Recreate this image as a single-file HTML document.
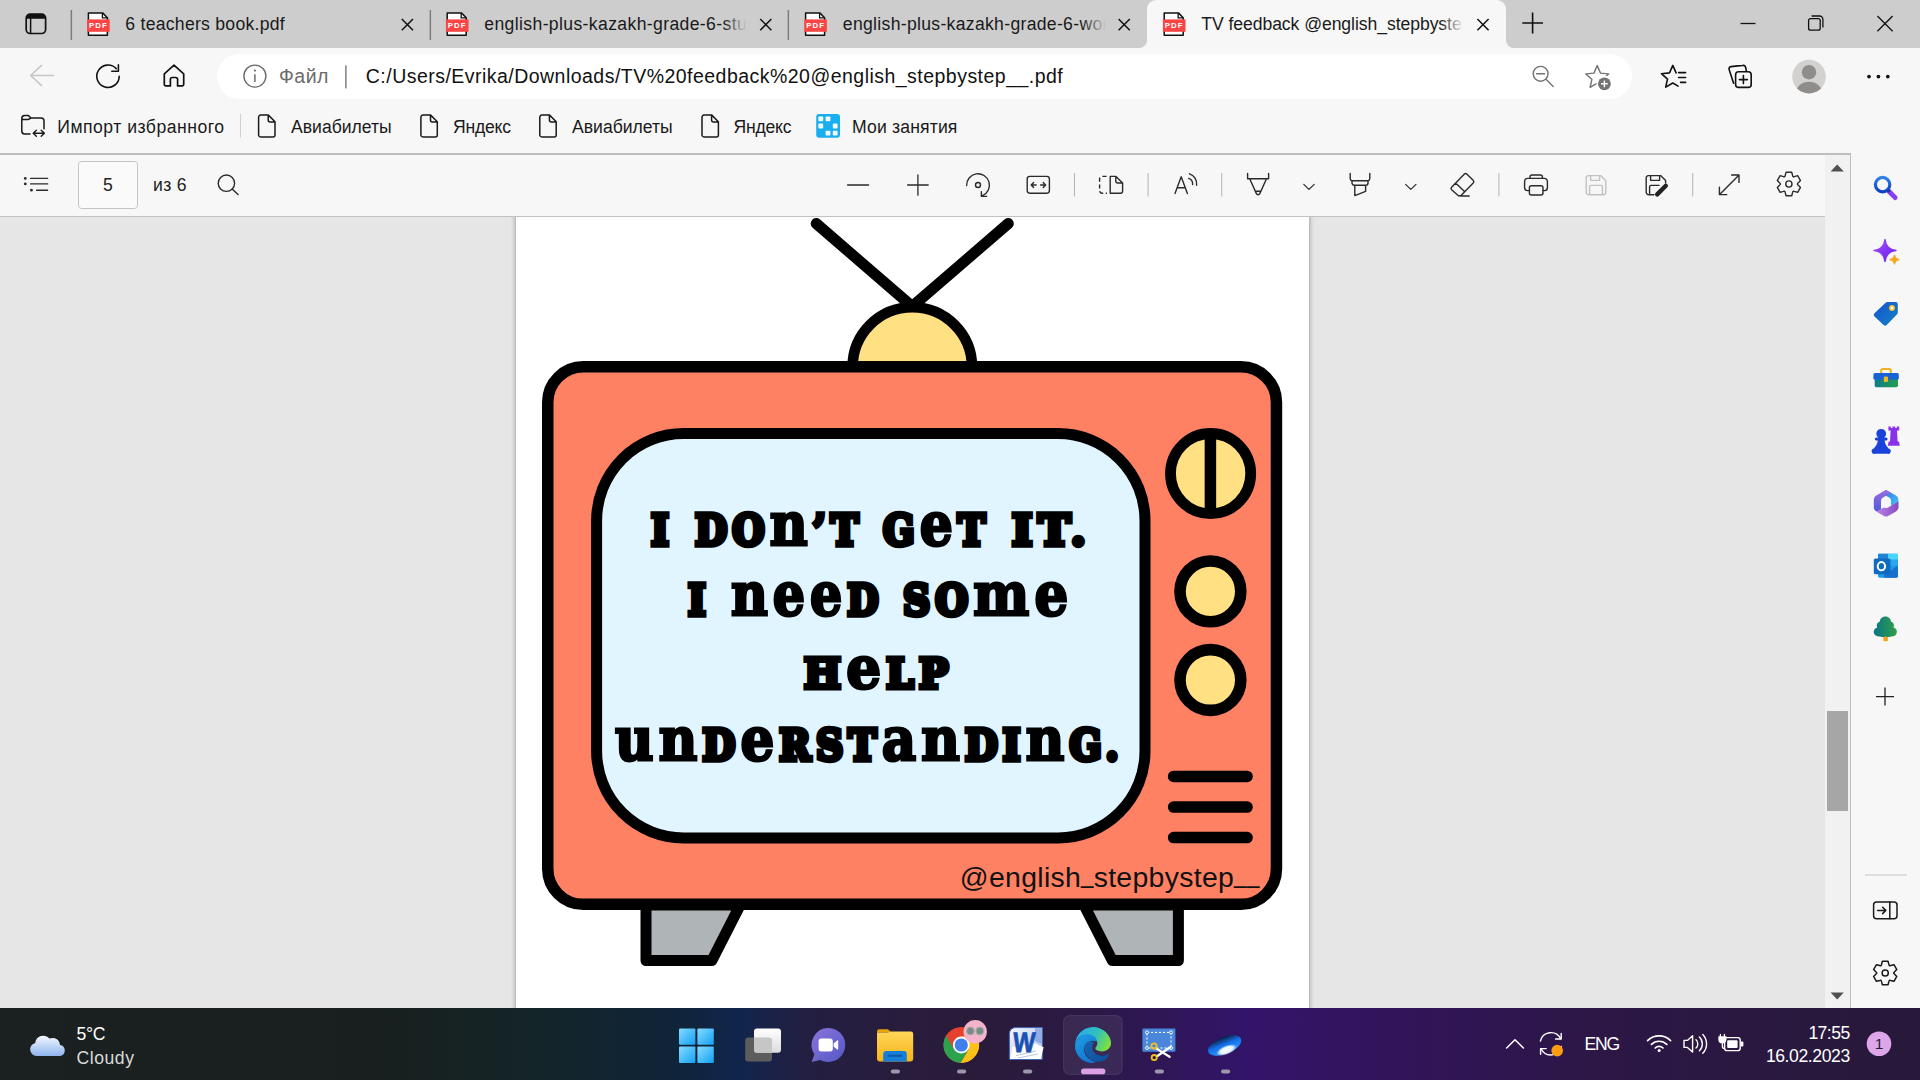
<!DOCTYPE html>
<html lang="ru">
<head>
<meta charset="utf-8">
<title>TV feedback @english_stepbystep__.pdf</title>
<style>
*{box-sizing:border-box;margin:0;padding:0}
html,body{width:1920px;height:1080px;overflow:hidden;background:#f7f7f7;font-family:"Liberation Sans",sans-serif;color:#1b1b1b}
.abs{position:absolute}
#root{position:relative;width:1920px;height:1080px;overflow:hidden}
svg{display:block;overflow:visible}
/* ---------- tab strip ---------- */
#tabs{left:0;top:0;width:1920px;height:48px;background:#cdcdcd}
.tabtxt{position:absolute;top:12px;height:24px;line-height:24px;font-size:17.6px;white-space:nowrap;overflow:hidden;color:#1a1a1a}
.tabsep{position:absolute;top:10px;width:1px;height:29px;background:#8e8e8e}
.fade{position:absolute;top:8px;width:40px;height:32px}
#activetab{left:1147px;top:0;width:359px;height:48px;background:#f7f7f7;border-radius:9px 9px 0 0}
#activetab:before,#activetab:after{content:"";position:absolute;bottom:0;width:8px;height:8px}
#activetab:before{left:-8px;background:radial-gradient(circle at 0 0,transparent 7.5px,#f7f7f7 8.5px)}
#activetab:after{right:-8px;background:radial-gradient(circle at 100% 0,transparent 7.5px,#f7f7f7 8.5px)}
/* ---------- address row ---------- */
#addr{left:0;top:48px;width:1920px;height:56px;background:#f7f7f7}
#pill{left:217px;top:54px;width:1415px;height:45px;border-radius:22.5px;background:#fff}
.urltxt{position:absolute;white-space:nowrap;font-size:19.5px;line-height:26px;top:63px}
/* ---------- bookmarks ---------- */
#bm{left:0;top:104px;width:1920px;height:49px;background:#f7f7f7}
.bmt{position:absolute;top:114.6px;line-height:24px;font-size:17.6px;white-space:nowrap;color:#1a1a1a}
/* ---------- pdf toolbar ---------- */
#pdfbar{left:0;top:155px;width:1825px;height:62px;background:#f7f7f7;border-bottom:1px solid #c2c2c2}
#viewer{left:0;top:217px;width:1825px;height:791px;background:#e6e6e6;overflow:hidden}
#page{left:516px;top:-10px;width:793px;height:820px;background:#fff;box-shadow:0 0 5px rgba(0,0,0,.42)}
#vscroll{left:1825px;top:155px;width:25px;height:853px;background:#f1f1f1}
#side{left:1850px;top:153px;width:70px;height:855px;background:#f7f7f7;border-left:1px solid #bdbdbd}
.tvl{position:absolute;font-family:"DejaVu Serif",serif;font-weight:bold;font-size:40px;line-height:80px;height:80px;white-space:nowrap;color:#000;transform-origin:0 0;-webkit-text-stroke:5px #000;letter-spacing:5.5px;word-spacing:4px;text-shadow:.7px 0 #000,-.7px 0 #000,0 .7px #000,0 -.7px #000}
.tvl b{font-weight:bold;font-size:1.404em;line-height:0;-webkit-text-stroke:2.8px #000}
.us{position:relative;top:-4.3px;display:inline-block;width:12.4px;transform:scaleX(.785);transform-origin:0 50%;letter-spacing:0}
/* ---------- taskbar ---------- */
#task{left:0;top:1008px;width:1920px;height:72px;background:linear-gradient(90deg,#1b2020 0%,#18201f 21%,#13252a 29%,#10243a 35.5%,#11254c 38.5%,#221f42 41.7%,#291c3c 47%,#2a1b3a 52%,#2c1948 57.3%,#33146a 65%,#32145a 73%,#2c1746 83%,#27193a 100%)}
.tt{position:absolute;color:#fff;white-space:nowrap;font-size:17.6px;line-height:22px}
</style>
</head>
<body>
<div id="root">

<!-- ================= TAB STRIP ================= -->
<div id="tabs" class="abs"></div>
<div id="activetab" class="abs"></div>
<!--TABS-->
<svg class="abs" style="left:0;top:0" width="1920" height="48" viewBox="0 0 1920 48">
  <defs>
    <g id="pdfico">
      <path d="M1.2 0.8 H15.4 L20.2 5.6 V23.2 H1.2 Z" fill="#fff" stroke="#111" stroke-width="1.5" stroke-linejoin="round"/>
      <path d="M15.2 1 V5.8 H20" fill="none" stroke="#111" stroke-width="1.3"/>
      <rect x="-0.1" y="7.3" width="22.6" height="12.4" fill="#fb4545"/>
    </g>
    <g id="tabx"><path d="M-5.6 -5.6 L5.6 5.6 M5.6 -5.6 L-5.6 5.6" stroke="#111" stroke-width="1.5" fill="none"/></g>
  </defs>
  <!-- tab actions -->
  <rect x="26.2" y="14.1" width="19.4" height="19.4" rx="4" fill="none" stroke="#111" stroke-width="1.7"/>
  <path d="M26.2 18.8 V18 A4 4 0 0 1 30.2 14.1 H41.6 A4 4 0 0 1 45.6 18 V18.8 Z" fill="#111"/>
  <path d="M30.6 18 V33.4" stroke="#111" stroke-width="1.5"/>
  <!-- separators -->
  <rect x="70.6" y="10" width="1.5" height="30" fill="#7d7d7d"/>
  <rect x="429.6" y="10" width="1.5" height="30" fill="#7d7d7d"/>
  <rect x="787.6" y="10" width="1.5" height="30" fill="#7d7d7d"/>
  <!-- pdf icons -->
  <use href="#pdfico" x="87.2" y="12.1"/>
  <use href="#pdfico" x="446" y="12.1"/>
  <use href="#pdfico" x="804.4" y="12.1"/>
  <use href="#pdfico" x="1163" y="12.1"/>
  <text x="98.4" y="27.9" font-family="Liberation Sans, sans-serif" font-weight="bold" font-size="7.8" fill="#fff" text-anchor="middle" letter-spacing="1.1">PDF</text>
  <text x="457.2" y="27.9" font-family="Liberation Sans, sans-serif" font-weight="bold" font-size="7.8" fill="#fff" text-anchor="middle" letter-spacing="1.1">PDF</text>
  <text x="815.6" y="27.9" font-family="Liberation Sans, sans-serif" font-weight="bold" font-size="7.8" fill="#fff" text-anchor="middle" letter-spacing="1.1">PDF</text>
  <text x="1174.2" y="27.9" font-family="Liberation Sans, sans-serif" font-weight="bold" font-size="7.8" fill="#fff" text-anchor="middle" letter-spacing="1.1">PDF</text>
  <!-- close buttons -->
  <use href="#tabx" x="407.4" y="24.6"/>
  <use href="#tabx" x="765.8" y="24.6"/>
  <use href="#tabx" x="1124.2" y="24.6"/>
  <use href="#tabx" x="1483" y="24.6"/>
  <!-- new tab -->
  <path d="M1522.3 23 H1543 M1532.6 12.6 V33.4" stroke="#111" stroke-width="1.6" fill="none"/>
  <!-- window controls -->
  <path d="M1740.5 23.5 H1755.5" stroke="#111" stroke-width="1.3"/>
  <rect x="1808.6" y="18.6" width="11.6" height="11.6" rx="2" fill="none" stroke="#111" stroke-width="1.3"/>
  <path d="M1811.6 16 H1819.5 A3.4 3.4 0 0 1 1822.9 19.4 V27.4" fill="none" stroke="#111" stroke-width="1.3"/>
  <path d="M1877.4 16 L1892.6 31.2 M1892.6 16 L1877.4 31.2" stroke="#111" stroke-width="1.3"/>
</svg>
<div class="tabtxt" id="t1" style="left:125.3px;letter-spacing:0.270px;width:262px">6 teachers book.pdf</div>
<div class="tabtxt" id="t2" style="left:484.3px;letter-spacing:0.369px;width:262px">english-plus-kazakh-grade-6-student-book.pdf</div>
<div class="tabtxt" id="t3" style="left:842.8px;letter-spacing:0.312px;width:262px">english-plus-kazakh-grade-6-workbook.pdf</div>
<div class="tabtxt" id="t4" style="left:1201.3px;letter-spacing:-0.068px;width:262px">TV feedback @english_stepbystep__.pdf</div>
<div class="fade" style="left:723px;width:25px;background:linear-gradient(90deg,rgba(205,205,205,0),#cdcdcd 95%)"></div>
<div class="fade" style="left:1081.5px;width:25px;background:linear-gradient(90deg,rgba(205,205,205,0),#cdcdcd 95%)"></div>
<div class="fade" style="left:1440px;width:25px;background:linear-gradient(90deg,rgba(247,247,247,0),#f7f7f7 95%)"></div>
<!--/TABS-->

<!-- ================= ADDRESS ROW ================= -->
<div id="addr" class="abs"></div>
<div id="pill" class="abs"></div>
<!--ADDR-->
<svg class="abs" style="left:0;top:48px" width="1920" height="56" viewBox="0 48 1920 56" fill="none">
  <!-- back (disabled) -->
  <path d="M53.6 75.5 H30.8 M41.6 65.4 L30.6 75.5 L41.6 85.6" stroke="#c6c6c6" stroke-width="1.5" stroke-linecap="round" stroke-linejoin="round"/>
  <!-- refresh -->
  <path d="M119.2 76.4 A11.2 11.2 0 1 1 116.2 68.6" stroke="#111" stroke-width="1.6" stroke-linecap="round"/>
  <path d="M118.4 64.9 V71.2 H111.8" stroke="#111" stroke-width="1.6" stroke-linecap="round" stroke-linejoin="round"/>
  <!-- home -->
  <path d="M174 65.2 L164.3 73.8 V84.6 A1.3 1.3 0 0 0 165.6 85.9 H170.4 V79.3 A1.8 1.8 0 0 1 172.2 77.5 H175.8 A1.8 1.8 0 0 1 177.6 79.3 V85.9 H182.4 A1.3 1.3 0 0 0 183.7 84.6 V73.8 Z" stroke="#111" stroke-width="1.7" stroke-linejoin="round"/>
  <!-- info -->
  <circle cx="254.9" cy="76.1" r="11" stroke="#6b6b6b" stroke-width="1.4"/>
  <path d="M254.9 74.2 V82" stroke="#6b6b6b" stroke-width="1.5"/>
  <circle cx="254.9" cy="70.6" r="1.1" fill="#6b6b6b"/>
  <rect x="345.2" y="65.4" width="1.4" height="23" fill="#777"/>
  <!-- zoom out -->
  <circle cx="1540.6" cy="73.8" r="7.4" stroke="#737373" stroke-width="1.4"/>
  <path d="M1546 79.3 L1553.2 86.4 M1536.6 73.8 H1544.6" stroke="#737373" stroke-width="1.4" stroke-linecap="round"/>
  <!-- add favourite -->
  <path d="M1597.2 65.6 L1600.5 73.1 L1608.6 73.9 L1602.5 79.3 L1604.3 87.3 L1597.2 83.2 L1590.1 87.3 L1591.9 79.3 L1585.8 73.9 L1593.9 73.1 Z" stroke="#737373" stroke-width="1.4" stroke-linejoin="round"/>
  <circle cx="1604.4" cy="83.8" r="8" fill="#fff"/>
  <circle cx="1604.4" cy="83.8" r="6.4" fill="#737373"/>
  <path d="M1601 83.8 H1607.8 M1604.4 80.4 V87.2" stroke="#fff" stroke-width="1.4"/>
  <!-- favourites -->
  <path d="M1676.1 72.9 L1672.8 65.4 L1669.5 72.9 L1661.4 73.7 L1667.5 79.1 L1665.7 87.1 L1672.8 83.0 L1678.1 86.1" stroke="#111" stroke-width="1.6" stroke-linejoin="round" stroke-linecap="round"/>
  <path d="M1678.6 72.6 H1685.6 M1678.6 77.5 H1685.6 M1680.6 82.4 H1685.6" stroke="#111" stroke-width="1.6" stroke-linecap="round"/>
  <!-- collections -->
  <path d="M1733.6 83.2 L1729.2 69.8 A2.6 2.6 0 0 1 1731 66.6 L1742.6 65.4 A2.6 2.6 0 0 1 1745.6 67.2 L1746.4 71.2" stroke="#111" stroke-width="1.6" stroke-linecap="round" stroke-linejoin="round"/>
  <rect x="1735.6" y="71.8" width="15.6" height="15.6" rx="3" stroke="#111" stroke-width="1.6"/>
  <path d="M1739.4 79.6 H1747.4 M1743.4 75.6 V83.6" stroke="#111" stroke-width="1.6" stroke-linecap="round"/>
  <!-- profile -->
  <circle cx="1809" cy="76.6" r="16.8" fill="#d3d1cf"/>
  <clipPath id="pclip"><circle cx="1809" cy="76.6" r="16.8"/></clipPath>
  <g clip-path="url(#pclip)" fill="#8f8c8a">
    <circle cx="1809" cy="72.2" r="7.2"/>
    <ellipse cx="1809" cy="92.4" rx="13" ry="10.6"/>
  </g>
  <!-- more -->
  <circle cx="1869" cy="76.6" r="1.85" fill="#111"/><circle cx="1878.4" cy="76.6" r="1.85" fill="#111"/><circle cx="1887.8" cy="76.6" r="1.85" fill="#111"/>
</svg>
<div class="urltxt" id="u1" style="left:279.0px;letter-spacing:0.482px;color:#6b6b6b">Файл</div>
<div class="urltxt" id="u2" style="left:365.8px;letter-spacing:0.471px;color:#111">C:/Users/Evrika/Downloads/TV%20feedback%20@english_stepbystep__.pdf</div>
<!--/ADDR-->

<!-- ================= BOOKMARKS ================= -->
<div id="bm" class="abs"></div>
<div class="abs" style="left:0;top:153px;width:1850px;height:2px;background:#bdbdbd"></div>
<!--BM-->
<svg class="abs" style="left:0;top:104px" width="1920" height="49" viewBox="0 104 1920 49" fill="none">
  <defs>
    <g id="docico"><path d="M2.6 0.8 H10.4 L17 7.4 V20.6 A2 2 0 0 1 15 22.6 H2.6 A2 2 0 0 1 0.6 20.6 V2.8 A2 2 0 0 1 2.6 0.8 Z M10.2 1 V5.6 A2 2 0 0 0 12.2 7.6 H16.8" stroke="#1a1a1a" stroke-width="1.5" stroke-linejoin="round"/></g>
  </defs>
  <!-- import favourites -->
  <path d="M30 134 H24.6 A3 3 0 0 1 21.8 131 V118.6 A3 3 0 0 1 24.6 115.6 H28.4 L31 118 H41 A3 3 0 0 1 44 121 V128.8 M22 119.6 H28 L31 118" stroke="#1a1a1a" stroke-width="1.5" stroke-linejoin="round" stroke-linecap="round"/>
  <path d="M33.6 133.2 H44 M36.4 130.2 L33.2 133.2 L36.4 136.2 M41.2 130.2 L44.4 133.2 L41.2 136.2" stroke="#1a1a1a" stroke-width="1.4" stroke-linejoin="round" stroke-linecap="round"/>
  <rect x="240" y="114" width="1" height="23.4" fill="#d0d0d0"/>
  <use href="#docico" x="258" y="114.3"/>
  <use href="#docico" x="420.3" y="114.3"/>
  <use href="#docico" x="539.2" y="114.3"/>
  <use href="#docico" x="701.4" y="114.3"/>
  <!-- moi zanyatiya -->
  <rect x="816.2" y="114" width="23.8" height="23.8" rx="3" fill="#19aef0"/>
  <g fill="#f2fbff">
    <rect x="818.4" y="116.4" width="4.8" height="4.8" rx=".8"/><rect x="825.6" y="116.4" width="4.8" height="4.8" rx=".8"/>
    <rect x="818.4" y="123.6" width="4.8" height="4.8" rx=".8"/><rect x="832.8" y="123.6" width="4.8" height="4.8" rx=".8"/>
    <rect x="825.6" y="130.8" width="4.8" height="4.8" rx=".8"/><rect x="832.8" y="130.8" width="4.8" height="4.8" rx=".8"/>
  </g>
</svg>
<div class="bmt" id="b1" style="left:57.3px;letter-spacing:0.495px;">Импорт избранного</div>
<div class="bmt" id="b2" style="left:291.0px;letter-spacing:-0.009px;">Авиабилеты</div>
<div class="bmt" id="b3" style="left:453.0px;letter-spacing:-0.234px;">Яндекс</div>
<div class="bmt" id="b4" style="left:572.0px;letter-spacing:-0.009px;">Авиабилеты</div>
<div class="bmt" id="b5" style="left:733.5px;letter-spacing:-0.234px;">Яндекс</div>
<div class="bmt" id="b6" style="left:852.1px;letter-spacing:0.143px;">Мои занятия</div>
<!--/BM-->

<!-- ================= PDF VIEWER ================= -->
<div id="pdfbar" class="abs"></div>
<div id="viewer" class="abs"><div id="page" class="abs"></div></div>
<!--TV-->
<svg class="abs" style="left:516px;top:216px" width="793" height="792" viewBox="516 216 793 792">
  <g stroke="#000" stroke-linecap="round" stroke-linejoin="round">
    <!-- legs -->
    <path d="M646 905 L740.2 905 L711.9 960.6 L646 960.6 Z" fill="#afb5b7" stroke-width="11"/>
    <path d="M1178.4 905 L1084 905 L1112.3 960.6 L1178.4 960.6 Z" fill="#afb5b7" stroke-width="11"/>
    <!-- antenna -->
    <path d="M816.2 223.5 L912.2 306.5 L1008.3 223.5" fill="none" stroke-width="11" stroke-linejoin="miter"/>
    <!-- dome -->
    <path d="M852.6 367 A59.7 59.7 0 0 1 972 367 Z" fill="#ffe082" stroke-width="10.6"/>
    <!-- body -->
    <rect x="547.75" y="366.85" width="728.7" height="537.5" rx="35.5" ry="35.5" fill="#ff8164" stroke-width="11.5"/>
    <!-- screen -->
    <rect x="596.6" y="433.6" width="548.4" height="404.3" rx="87" ry="87" fill="#e0f5ff" stroke-width="11"/>
    <!-- knobs -->
    <circle cx="1210.6" cy="473.6" r="40.1" fill="#ffe082" stroke-width="10.8"/>
    <path d="M1210.4 434 V513" stroke-width="11.5" stroke-linecap="butt"/>
    <circle cx="1210.4" cy="591.4" r="30.4" fill="#ffe082" stroke-width="11.6"/>
    <circle cx="1210.4" cy="680" r="30.4" fill="#ffe082" stroke-width="11.6"/>
    <!-- speaker lines -->
    <path d="M1173.6 776.4 H1247.1 M1173.6 807.1 H1247.1 M1173.6 837.6 H1247.1" stroke-width="11.5"/>
  </g>
</svg>
<div class="tvl" id="l1a" style="left:650.6px;top:486.7px;transform:scale(0.9550,1.0686)">I</div>
<div class="tvl" id="l1b" style="left:694.8px;top:486.7px;transform:scale(0.9274,1.0686)">DO<b>n</b>’T</div>
<div class="tvl" id="l1c" style="left:882.9px;top:486.7px;transform:scale(0.9246,1.0686)">G<b>e</b>T</div>
<div class="tvl" id="l1d" style="left:1012.0px;top:486.7px;transform:scale(1.0809,1.0686)">IT.</div>
<div class="tvl" id="l2a" style="left:688.1px;top:558.4px;transform:scale(0.9500,1.0629)">I</div>
<div class="tvl" id="l2b" style="left:731.0px;top:558.4px;transform:scale(0.9018,1.0629)"><b>nee</b>D</div>
<div class="tvl" id="l2c" style="left:902.6px;top:558.4px;transform:scale(0.9414,1.0629)">SO<b>me</b></div>
<div class="tvl" id="l3" style="left:804.0px;top:631.7px;transform:scale(0.9742,1.0457)">H<b>e</b>LP</div>
<div class="tvl" id="l4" style="left:614.7px;top:703.2px;transform:scale(0.9439,1.0571)"><b>un</b>D<b>e</b>RST<b>an</b>DI<b>n</b>G.</div>
<div class="abs" id="handle" style="left:959.8px;top:859.7px;letter-spacing:0.33px;font-size:28.4px;line-height:34px;white-space:nowrap;color:#111;transform-origin:0 0">@english<span class="us">_</span>stepbystep<span class="us">_</span><span class="us">_</span></div>
<!--/TV-->
<div id="vscroll" class="abs"></div>
<!--PDFBAR-->
<svg class="abs" style="left:0;top:155px" width="1850" height="61" viewBox="0 155 1850 61" fill="none" stroke="#2b2b2b" stroke-width="1.4" stroke-linecap="round" stroke-linejoin="round">
  <!-- contents -->
  <g stroke="none" fill="#2b2b2b"><circle cx="25.3" cy="178.4" r="1.4"/><circle cx="25.3" cy="183.9" r="1.4"/><circle cx="31.4" cy="190.2" r="1.4"/></g>
  <path d="M30.6 178.4 H47.6 M30.6 183.9 H47.6 M36.6 190.2 H47.6"/>
  <rect x="78.5" y="161.5" width="59" height="47" rx="3" fill="#fafafa" stroke="#c4c4c4" stroke-width="1"/>
  <!-- search -->
  <circle cx="226.4" cy="183.2" r="8.2"/><path d="M232.4 189.2 L238 194.6"/>
  <!-- zoom -->
  <path d="M847.6 185 H868.6" stroke-width="1.3"/>
  <path d="M907.6 185 H928.2 M917.9 174.8 V195.2" stroke-width="1.3"/>
  <!-- rotate -->
  <path d="M966.6 185.6 A11.4 11.4 0 1 1 982.6 195.6"/>
  <path d="M981.4 191.6 V196.4 H986.6"/>
  <circle cx="978" cy="185" r="2.5"/>
  <!-- fit width -->
  <rect x="1027.2" y="176.4" width="22.2" height="16.8" rx="2.6"/>
  <path d="M1031.4 185 H1036.2 M1033.6 182.6 L1031.2 185 L1033.6 187.4 M1040.6 185 H1045.4 M1043.2 182.6 L1045.6 185 L1043.2 187.4"/>
  <rect x="1074" y="173" width="1" height="23.4" fill="#b4b4b4" stroke="none"/>
  <!-- page view -->
  <path d="M1110.2 193.2 V176.4 H1116 L1122.6 183 V191 A2.2 2.2 0 0 1 1120.4 193.2 Z M1115.8 176.6 V181 A2 2 0 0 0 1117.8 183 H1122.4"/>
  <path d="M1106.6 176.4 H1102 A2.4 2.4 0 0 0 1099.6 178.8 V190.8 A2.4 2.4 0 0 0 1102 193.2 H1107" stroke-dasharray="4.2 2.6" stroke-linecap="butt"/>
  <rect x="1147.6" y="173" width="1" height="23.4" fill="#b4b4b4" stroke="none"/>
  <!-- read aloud -->
  <path d="M1175 193.6 L1181.2 176.8 L1187.4 193.6 M1177.2 187.8 H1185.2" />
  <path d="M1188.6 178.4 A6 6 0 0 1 1192.6 184.6 M1189.4 173.8 A10.6 10.6 0 0 1 1196.6 185.2"/>
  <rect x="1221.2" y="173" width="1" height="23.4" fill="#b4b4b4" stroke="none"/>
  <!-- draw -->
  <path d="M1247.6 173.4 V178.8 H1268.6 V173.4 M1249.8 179 L1256.4 193.6 A1.8 1.8 0 0 0 1259.8 193.6 L1266.4 179 M1256 191.2 H1260.2"/>
  <path d="M1303.8 184.4 L1309 189.4 L1314.2 184.4" stroke-width="1.2"/>
  <!-- highlight -->
  <path d="M1350.2 173.4 V178.4 A2.6 2.6 0 0 0 1352 180.8 V183 A2.2 2.2 0 0 0 1354.2 185.2 H1365.8 A2.2 2.2 0 0 0 1368 183 V180.8 A2.6 2.6 0 0 0 1369.8 178.4 V173.4 M1352 180.8 H1368 M1354.8 185.4 V195.6 L1365.6 191.4 V185.4"/>
  <path d="M1405.6 184.4 L1410.8 189.4 L1416 184.4" stroke-width="1.2"/>
  <!-- erase -->
  <path d="M1451.6 187.2 L1464.2 174.2 A2 2 0 0 1 1467 174.2 L1473.2 180.2 A2 2 0 0 1 1473.2 183 L1460.8 195.8 H1458.4 L1451.6 189.8 A1.9 1.9 0 0 1 1451.6 187.2 Z M1455.6 183 L1464.8 191.8 M1460.6 196 H1469.2"/>
  <rect x="1498.4" y="173" width="1" height="23.4" fill="#b4b4b4" stroke="none"/>
  <!-- print -->
  <path d="M1529.6 190.6 H1527.4 A2.8 2.8 0 0 1 1524.6 187.8 V181.4 A3 3 0 0 1 1527.6 178.4 H1544.4 A3 3 0 0 1 1547.4 181.4 V187.8 A2.8 2.8 0 0 1 1544.6 190.6 H1542.8 M1530 178.2 V177 A2 2 0 0 1 1532 175 H1540.4 A2 2 0 0 1 1542.4 177 V178.2"/>
  <rect x="1529.4" y="185.8" width="13.6" height="9.2" rx="2"/>
  <!-- save disabled -->
  <g stroke="#c2c2c2"><path d="M1588.4 175.6 H1600.6 L1605.8 180.8 V192.2 A2.6 2.6 0 0 1 1603.2 194.8 H1588.8 A2.6 2.6 0 0 1 1586.2 192.2 V178 A2.4 2.4 0 0 1 1588.4 175.6 Z M1590.6 175.8 V180.4 H1599.6 V175.8 M1589.6 194.6 V186.8 A1.4 1.4 0 0 1 1591 185.4 H1601 A1.4 1.4 0 0 1 1602.4 186.8 V194.6"/></g>
  <!-- save as -->
  <path d="M1654 194.8 H1648.8 A2.6 2.6 0 0 1 1646.2 192.2 V178 A2.4 2.4 0 0 1 1648.4 175.6 H1660.6 L1665.6 180.6 V183 M1650.6 175.8 V180.4 H1659.6 V175.8 M1649.6 194.6 V186.8 A1.4 1.4 0 0 1 1651 185.4 H1659"/>
  <path d="M1657.2 194.4 L1665.8 185.8" stroke-width="4.4" stroke="#222"/>
  <rect x="1692.2" y="173" width="1" height="23.4" fill="#b4b4b4" stroke="none"/>
  <!-- fullscreen -->
  <path d="M1719.6 194.4 L1738.8 175.2 M1731.6 175 H1739 V182.4 M1719.4 187.2 V194.6 H1726.8"/>
  <!-- settings -->
  <path d="M1785.16 175.60 L1786.08 172.23 L1791.72 172.23 L1792.64 175.60 Q1792.80 177.25 1794.31 176.56 L1797.68 175.67 L1800.50 180.56 L1798.05 183.04 Q1796.70 184.00 1798.05 184.96 L1800.50 187.44 L1797.68 192.33 L1794.31 191.44 Q1792.80 190.75 1792.64 192.40 L1791.72 195.77 L1786.08 195.77 L1785.16 192.40 Q1785.00 190.75 1783.49 191.44 L1780.12 192.33 L1777.30 187.44 L1779.75 184.96 Q1781.10 184.00 1779.75 183.04 L1777.30 180.56 L1780.12 175.67 L1783.49 176.56 Q1785.00 177.25 1785.16 175.60 Z" stroke-linejoin="round"/>
  <circle cx="1788.9" cy="184" r="3.1"/>
  <!-- scrollbar arrows & thumb -->
  <path d="M1830.6 171.4 L1837.2 164.6 L1843.8 171.4 Z" fill="#505050" stroke="none"/>
</svg>
<div class="abs" id="p1" style="left:78px;top:173px;width:60px;text-align:center;font-size:17.6px;line-height:24px;color:#222">5</div>
<div class="abs" id="p2" style="left:153.1px;letter-spacing:0.274px;top:173px;font-size:17.6px;line-height:24px;color:#222;white-space:nowrap">из 6</div>
<div class="abs" style="left:1827px;top:711px;width:21px;height:100px;background:#a6a6a6"></div>
<svg class="abs" style="left:1825px;top:985px" width="25" height="20" viewBox="1825 985 25 20"><path d="M1830.6 992.6 L1837.2 999.4 L1843.8 992.6 Z" fill="#505050"/></svg>
<!--/PDFBAR-->
<div id="side" class="abs"></div>
<!--SIDE-->
<svg class="abs" style="left:1851px;top:155px" width="69" height="853" viewBox="1851 155 69 853" fill="none">
  <defs>
    <linearGradient id="gsb" x1="0" y1="0" x2="0" y2="1"><stop offset="0" stop-color="#2b83ea"/><stop offset="1" stop-color="#123fc4"/></linearGradient>
    <linearGradient id="gsp" x1="0" y1="0" x2="1" y2="1"><stop offset="0" stop-color="#a14bff"/><stop offset="1" stop-color="#6b22e8"/></linearGradient>
    <linearGradient id="gtag" x1="0" y1="0" x2="1" y2="1"><stop offset="0" stop-color="#1a4fd0"/><stop offset="1" stop-color="#0f86c4"/></linearGradient>
    <linearGradient id="gbox" x1="0" y1="0" x2="1" y2="0"><stop offset="0" stop-color="#147a8c"/><stop offset="1" stop-color="#22a04c"/></linearGradient>
    <linearGradient id="gtree" x1="0" y1="0" x2="1" y2="0"><stop offset="0" stop-color="#0c7486"/><stop offset="1" stop-color="#2fa048"/></linearGradient>
    <linearGradient id="gm1" x1="0" y1="0" x2="1" y2="1"><stop offset="0" stop-color="#2a6ae0"/><stop offset="1" stop-color="#48d0f8"/></linearGradient>
    <linearGradient id="gm2" x1="0" y1="0" x2="0" y2="1"><stop offset="0" stop-color="#9a6ae0"/><stop offset="1" stop-color="#4a5ad8"/></linearGradient>
    <linearGradient id="gm3" x1="0" y1="0" x2="1" y2="0"><stop offset="0" stop-color="#b884e6"/><stop offset="1" stop-color="#8a4ac0"/></linearGradient>
  </defs>
  <!-- search -->
  <path d="M1888.6 191 L1895.2 197.6" stroke="#8a3ff2" stroke-width="4.8" stroke-linecap="round"/>
  <path d="M1887.4 189.6 L1889.6 191.8" stroke="#24306a" stroke-width="3"/>
  <circle cx="1882.6" cy="184.6" r="7.2" stroke="url(#gsb)" stroke-width="3.2"/>
  <!-- sparkle -->
  <path d="M1885 239.5 Q1886.09 249.31 1895.90 250.40 Q1886.09 251.49 1885.00 261.30 Q1883.91 251.49 1874.10 250.40 Q1883.91 249.31 1885.00 239.50 Z" fill="url(#gsp)" stroke="url(#gsp)" stroke-width="1.5" stroke-linejoin="round"/>
  <path d="M1894.5 254.8 Q1894.98 259.12 1899.30 259.60 Q1894.98 260.08 1894.50 264.40 Q1894.02 260.08 1889.70 259.60 Q1894.02 259.12 1894.50 254.80 Z" fill="#f2a81a" stroke="#f2a81a" stroke-width="1" stroke-linejoin="round"/>
  <!-- tag -->
  <path d="M1887.4 302 H1895.6 A2.2 2.2 0 0 1 1897.8 304.2 V312.6 A2.4 2.4 0 0 1 1897.1 314.3 L1886.7 325 A2.2 2.2 0 0 1 1883.6 325 L1874.5 316.4 A2.2 2.2 0 0 1 1874.5 313.3 L1885.6 302.7 A2.6 2.6 0 0 1 1887.4 302 Z" fill="url(#gtag)"/>
  <circle cx="1892" cy="308" r="2.2" fill="#fff" stroke="#f6c41c" stroke-width="1.5"/>
  <!-- toolbox -->
  <rect x="1881.2" y="369" width="9.6" height="7" rx="1.8" stroke="#efb01f" stroke-width="2.1"/>
  <rect x="1874.7" y="378.6" width="23.3" height="8.6" rx="1.6" fill="url(#gbox)"/>
  <rect x="1873.4" y="373" width="25.4" height="6.8" rx="1.6" fill="#1763d6"/>
  <rect x="1883.8" y="376.6" width="4.2" height="5.4" rx="1" fill="#f3b81f"/>
  <!-- chess -->
  <path d="M1888.4 426.4 V430.4 H1890.6 L1890 441.6 H1888.6 L1887.8 445.8 H1899.8 L1899 441.6 H1897.6 L1897 430.4 H1899.2 V426.4 H1896.8 V428 H1895.2 V426.4 H1892.4 V428 H1890.8 V426.4 Z" fill="#8a32ea"/>
  <path d="M1881.2 429 A4.7 4.7 0 0 1 1884.2 437.4 H1886 A1.4 1.4 0 0 1 1886 440.6 H1884.6 C1885 444 1886.6 446.6 1888.6 448.4 A2.7 2.7 0 0 1 1887.4 453.8 H1875 A2.7 2.7 0 0 1 1873.8 448.4 C1875.8 446.6 1877.4 444 1877.8 440.6 H1876.4 A1.4 1.4 0 0 1 1876.4 437.4 H1878.2 A4.7 4.7 0 0 1 1881.2 429 Z" fill="#1b43da"/>
  <!-- m365 -->
  <path d="M1886 490 L1896 495.6 Q1898.4 497 1898.4 499.8 V509 L1891 505.6 V500.4 Q1891 498.4 1889.2 497.4 L1881 493 Z" fill="url(#gm1)"/>
  <path d="M1886 490 L1876.2 495.6 Q1873.8 497 1873.8 499.8 V507.2 Q1873.8 510 1876.2 511.2 L1881 513.6 V500.6 Q1881 498.4 1883 497.4 L1891 493 Z" fill="url(#gm2)"/>
  <path d="M1898.4 507 Q1898.4 510 1896 511.4 L1888 516 Q1886 517 1884 516 L1876.2 511.4 L1884 507.4 Q1886 508.6 1888 507.4 L1898.4 501.4 Z" fill="url(#gm3)"/>
  <!-- outlook -->
  <rect x="1878" y="553.8" width="20" height="12" rx="1.4" fill="#1e8fe0"/>
  <rect x="1888" y="553.8" width="10" height="6" fill="#48d4fc"/><rect x="1878" y="553.8" width="10" height="6" fill="#1f84d8"/><rect x="1888" y="559.8" width="10" height="6" fill="#2aa6ee"/>
  <path d="M1878 565.6 H1898 V576 A1.8 1.8 0 0 1 1896.2 577.8 H1879.8 A1.8 1.8 0 0 1 1878 576 Z" fill="#1a9ae8"/>
  <path d="M1898 565.6 L1884 575 V577.8 H1896.2 A1.8 1.8 0 0 0 1898 576 Z" fill="#1672cc"/>
  <rect x="1873.8" y="558.6" width="16.6" height="15.6" rx="1.6" fill="#0f6bc0"/>
  <ellipse cx="1881.4" cy="566.2" rx="3.7" ry="4.1" stroke="#fff" stroke-width="2"/>
  <!-- tree -->
  <rect x="1883.3" y="635" width="4.6" height="6.2" rx="1" fill="#f1a41c"/>
  <path d="M1885.4 616.6 C1888.8 616.6 1890.8 619 1890.9 621.6 C1893.6 622.4 1894.6 625.2 1893.6 627.6 C1896.4 628.6 1897.6 631.2 1896.4 633.8 C1895.4 636 1893 636.8 1890.8 636.4 C1889 637.4 1887 637.2 1885.4 636.2 C1883.8 637.2 1881.6 637.4 1880 636.4 C1877.8 636.8 1875.2 636 1874.2 633.8 C1873 631.2 1874.4 628.6 1877.2 627.6 C1876.2 625.2 1877.2 622.4 1879.9 621.6 C1880 619 1882 616.6 1885.4 616.6 Z" fill="url(#gtree)"/>
  <!-- plus -->
  <path d="M1876 696.6 H1894 M1885 687.6 V705.6" stroke="#222" stroke-width="1.3"/>
  <rect x="1865" y="874.5" width="42" height="1" fill="#c6c6c6"/>
  <!-- panel -->
  <rect x="1873.6" y="902" width="23.4" height="16.8" rx="3" stroke="#1a1a1a" stroke-width="1.5"/>
  <path d="M1889.8 902 V918.8 M1877.6 910.4 H1885.6 M1882.6 907.2 L1885.8 910.4 L1882.6 913.6" stroke="#1a1a1a" stroke-width="1.5" stroke-linecap="round" stroke-linejoin="round"/>
  <!-- gear -->
  <path d="M1881.46 964.60 L1882.38 961.23 L1888.02 961.23 L1888.94 964.60 Q1889.10 966.25 1890.61 965.56 L1893.98 964.67 L1896.80 969.56 L1894.35 972.04 Q1893.00 973.00 1894.35 973.96 L1896.80 976.44 L1893.98 981.33 L1890.61 980.44 Q1889.10 979.75 1888.94 981.40 L1888.02 984.77 L1882.38 984.77 L1881.46 981.40 Q1881.30 979.75 1879.79 980.44 L1876.42 981.33 L1873.60 976.44 L1876.05 973.96 Q1877.40 973.00 1876.05 972.04 L1873.60 969.56 L1876.42 964.67 L1879.79 965.56 Q1881.30 966.25 1881.46 964.60 Z" stroke="#1a1a1a" stroke-width="1.5" stroke-linejoin="round"/>
  <circle cx="1885.2" cy="973" r="3.1" stroke="#1a1a1a" stroke-width="1.5"/>
</svg>
<!--/SIDE-->

<!-- ================= TASKBAR ================= -->
<div id="task" class="abs"></div>
<!--TASK-->
<svg class="abs" style="left:0;top:1008px" width="1920" height="72" viewBox="0 1008 1920 72" fill="none">
  <defs>
    <linearGradient id="gcloud" x1="0" y1="0" x2="0" y2="1"><stop offset="0" stop-color="#f4f8ff"/><stop offset="1" stop-color="#8fb4ee"/></linearGradient>
    <linearGradient id="gwin" x1="0" y1="0" x2="1" y2="1"><stop offset="0" stop-color="#86dcff"/><stop offset="1" stop-color="#12a0f6"/></linearGradient>
    <linearGradient id="gtv" x1="0" y1="0" x2="0" y2="1"><stop offset="0" stop-color="#ffffff"/><stop offset="1" stop-color="#dcdcdc"/></linearGradient>
    <linearGradient id="gchat" x1="0" y1="0" x2="1" y2="1"><stop offset="0" stop-color="#8a74dc"/><stop offset="1" stop-color="#5458c4"/></linearGradient>
    <linearGradient id="gfold" x1="0" y1="0" x2="0" y2="1"><stop offset="0" stop-color="#ffd65a"/><stop offset="1" stop-color="#f7b417"/></linearGradient>
    <linearGradient id="gword" x1="0" y1="0" x2="1" y2="1"><stop offset="0" stop-color="#f4f7fd"/><stop offset="1" stop-color="#a9bfe8"/></linearGradient>
    <linearGradient id="gedge1" x1="0" y1="0.2" x2="1" y2="0.6"><stop offset="0" stop-color="#2aa8ee"/><stop offset=".55" stop-color="#2fc0bc"/><stop offset="1" stop-color="#7fe03a"/></linearGradient>
    <linearGradient id="gedge2" x1="0" y1="0" x2="0.6" y2="1"><stop offset="0" stop-color="#1f9fe6"/><stop offset="1" stop-color="#1076d0"/></linearGradient><linearGradient id="gedge3" x1="0" y1="0" x2="1" y2="1"><stop offset="0" stop-color="#1565b2"/><stop offset="1" stop-color="#0d4f9a"/></linearGradient>
    <linearGradient id="gufo" x1="0" y1="0" x2="0" y2="1"><stop offset="0" stop-color="#0c1a3c"/><stop offset=".45" stop-color="#1470e8"/><stop offset="1" stop-color="#2a9cff"/></linearGradient>
    <radialGradient id="gglow"><stop offset="0" stop-color="#ffffff"/><stop offset=".6" stop-color="#e8f4ff"/><stop offset="1" stop-color="#e8f4ff" stop-opacity="0"/></radialGradient>
    <clipPath id="cchrome"><circle cx="961.3" cy="1045" r="18"/></clipPath>
  </defs>
  <!-- weather cloud -->
  <path d="M36.4 1056 A6.6 6.6 0 0 1 35.2 1043 A8.2 8.2 0 0 1 49.6 1038.6 A7.4 7.4 0 0 1 60 1045 A5.6 5.6 0 0 1 60.4 1056 Z" fill="url(#gcloud)"/>
  <!-- start -->
  <g fill="url(#gwin)"><rect x="679" y="1028.4" width="16.4" height="16.4" rx="1"/><rect x="697.4" y="1028.4" width="16.4" height="16.4" rx="1"/><rect x="679" y="1046.6" width="16.4" height="16.4" rx="1"/><rect x="697.4" y="1046.6" width="16.4" height="16.4" rx="1"/></g>
  <!-- task view -->
  <rect x="745.2" y="1037.4" width="26.8" height="24" rx="3" fill="#5d5d5d"/>
  <rect x="754" y="1028.4" width="27" height="24.4" rx="3" fill="url(#gtv)"/>
  <path d="M754 1037.4 H769 A3 3 0 0 1 772 1040.4 V1052.8 H757 A3 3 0 0 1 754 1049.8 Z" fill="#c6c6c6"/>
  <!-- chat -->
  <path d="M828.4 1028.1 A16.9 16.9 0 1 1 820.4 1059.9 L811.6 1062 L814.4 1054.4 A16.9 16.9 0 0 1 828.4 1028.1 Z" fill="url(#gchat)"/>
  <rect x="818.6" y="1038.5" width="14.2" height="12.9" rx="2.6" fill="#fff"/>
  <path d="M833.6 1043.4 L837.2 1040.4 A.6 .6 0 0 1 838.2 1040.9 V1049.1 A.6 .6 0 0 1 837.2 1049.6 L833.6 1046.6 Z" fill="#fff"/>
  <!-- explorer -->
  <path d="M877 1031.6 A2.4 2.4 0 0 1 879.4 1029.2 H888 L891.4 1032.6 H877 Z" fill="#e6a408"/>
  <path d="M877 1032.6 H888 L891 1031.4 H910.8 A2.4 2.4 0 0 1 913.2 1033.8 V1059 A2.4 2.4 0 0 1 910.8 1061.4 H879.4 A2.4 2.4 0 0 1 877 1059 Z" fill="url(#gfold)"/>
  <path d="M883.2 1061.4 V1054 A3 3 0 0 1 886.2 1051 H903.8 A3 3 0 0 1 906.8 1054 V1061.4 Z" fill="#157fd8"/>
  <rect x="887.6" y="1054.8" width="14.8" height="2" rx="1" fill="#0a5aa8"/>
  <!-- chrome -->
  <g clip-path="url(#cchrome)">
    <circle cx="961.3" cy="1045" r="18" fill="#e5412e"/>
    <path d="M977.22 1036.60 A18 18 0 0 1 960.61 1062.99 L968.57 1049.20 L961.3 1045 L961.30 1036.60 Z" fill="#fbc116"/>
    <path d="M960.61 1062.99 A18 18 0 0 1 946.07 1035.41 L954.03 1049.20 L961.3 1045 L968.57 1049.20 Z" fill="#2ba24c"/>
  </g>
  <circle cx="961.3" cy="1045" r="8.4" fill="#fff"/><circle cx="961.3" cy="1045" r="6.6" fill="#3f7fec"/>
  <circle cx="975.2" cy="1031.7" r="11.7" fill="#f2b3cb"/>
  <circle cx="970.4" cy="1031" r="3.9" fill="#7c8a86" stroke="#a8b0ac" stroke-width="1"/><circle cx="979.8" cy="1031" r="3.9" fill="#7c8a86" stroke="#a8b0ac" stroke-width="1"/>
  <!-- word -->
  <path d="M1009.4 1033.6 A6 6 0 0 1 1015.4 1027.6 H1042.4 V1059.4 H1009.4 Z" fill="url(#gword)" stroke="#3c62b4" stroke-width="1"/>
  <path d="M1035 1028.2 H1041.8 V1044 L1035 1041 Z" fill="#7f9fe0" opacity=".75"/>
  <path d="M1010 1059 L1012.6 1047 L1034.6 1043.2 L1043.6 1047.2 L1040.8 1059 Z" fill="#fff"/>
  <path d="M1016 1055.6 L1036 1051 M1018 1058 L1038 1054" stroke="#b8c6e6" stroke-width="1"/>
  <!-- edge highlight -->
  <rect x="1063.6" y="1015.6" width="58.6" height="58.8" rx="6" fill="#fff" fill-opacity=".07" stroke="#fff" stroke-opacity=".1" stroke-width="1"/>
  <!-- edge logo -->
  <path d="M1075.0 1046.0 C1075.0 1041.0 1081.0 1033.0 1089.0 1033.0 C1094.0 1036.0 1098.0 1039.0 1099.0 1043.0 C1096.0 1040.5 1092.0 1040.2 1089.0 1041.8 C1085.0 1044.0 1083.5 1048.0 1084.5 1052.0 C1085.5 1056.5 1090.0 1060.5 1096.0 1062.0 C1094.0 1062.8 1092.0 1063.0 1091.0 1063.0 C1082.0 1062.0 1075.0 1055.0 1075.0 1046.0 Z" fill="url(#gedge2)"/>
  <path d="M1084.4 1047.0 C1084.4 1055.0 1091.0 1061.8 1099.0 1061.8 C1103.0 1061.8 1106.8 1059.5 1108.6 1055.6 C1109.2 1054.2 1108.4 1053.7 1107.4 1054.3 C1104.0 1056.4 1099.0 1056.4 1095.6 1053.8 C1091.6 1050.8 1091.2 1045.6 1094.4 1042.4 C1089.6 1040.4 1084.4 1042.0 1084.4 1047.0 Z" fill="url(#gedge3)"/>
  <path d="M1075.0 1046.0 C1075.0 1035.5 1083.0 1027.0 1093.0 1027.0 C1103.0 1027.0 1111.0 1035.0 1111.0 1043.0 C1111.0 1048.0 1107.0 1051.4 1102.0 1051.4 C1098.0 1051.4 1095.6 1050.2 1095.3 1048.6 C1095.1 1047.5 1097.0 1046.4 1097.4 1043.4 C1098.0 1038.6 1093.0 1034.2 1087.0 1034.2 C1081.0 1034.2 1075.5 1039.0 1075.0 1046.0 Z" fill="url(#gedge1)"/>
  <rect x="1081" y="1068.6" width="24.4" height="5.6" rx="2.8" fill="#dca0e6"/>
  <!-- snip -->
  <rect x="1142.4" y="1028.4" width="33" height="23.4" rx="1" fill="#4a86da"/>
  <rect x="1147" y="1032.4" width="24" height="15.6" stroke="#fff" stroke-width="1" stroke-dasharray="2.2 1.8"/>
  <g fill="#4a86da" stroke="#fff" stroke-width=".9"><circle cx="1147" cy="1032.4" r="1.5"/><circle cx="1171" cy="1032.4" r="1.5"/><circle cx="1147" cy="1048" r="1.5"/><circle cx="1171" cy="1048" r="1.5"/></g>
  <path d="M1156 1048.4 L1169.6 1056.8 M1157.4 1056 L1170.4 1047" stroke="#fff" stroke-width="2.2" stroke-linecap="round"/>
  <circle cx="1154" cy="1046" r="2.6" stroke="#f2c21c" stroke-width="1.8"/><circle cx="1154.2" cy="1057.6" r="2.6" stroke="#f2c21c" stroke-width="1.8"/>
  <!-- ufo -->
  <g transform="rotate(-22 1224.6 1045.4)">
    <ellipse cx="1224.6" cy="1045.4" rx="17.6" ry="8.6" fill="url(#gufo)"/>
    <ellipse cx="1224.6" cy="1050.4" rx="11" ry="4.6" fill="url(#gglow)"/>
  </g>
  <!-- running dots -->
  <g fill="#9b99a9"><rect x="890.8" y="1069.4" width="9.2" height="4.2" rx="2.1"/><rect x="957" y="1069.4" width="9.2" height="4.2" rx="2.1"/><rect x="1023" y="1069.4" width="9.2" height="4.2" rx="2.1"/><rect x="1154.8" y="1069.4" width="9.2" height="4.2" rx="2.1"/><rect x="1221" y="1069.4" width="9.2" height="4.2" rx="2.1"/></g>
  <!-- tray chevron -->
  <path d="M1506.6 1048 L1515 1039.8 L1523.4 1048" stroke="#fff" stroke-width="1.5" stroke-linecap="round" stroke-linejoin="round"/>
  <!-- sync -->
  <path d="M1540.4 1041 A10.8 10.8 0 0 1 1560.6 1038.6 M1561.4 1046.4 A10.8 10.8 0 0 1 1541.2 1049" stroke="#fff" stroke-width="1.4" stroke-linecap="round"/>
  <path d="M1561.2 1033.4 V1039 H1555.6 M1540.6 1054.2 V1048.6 H1546.2" stroke="#fff" stroke-width="1.4" stroke-linecap="round" stroke-linejoin="round"/>
  <circle cx="1557.2" cy="1050.6" r="5.8" fill="#ff9c10"/>
  <!-- wifi -->
  <path d="M1647.6 1040.6 A16.4 16.4 0 0 1 1670.6 1040.6 M1651.4 1044.4 A11 11 0 0 1 1666.8 1044.4 M1655.2 1048 A5.6 5.6 0 0 1 1663 1048" stroke="#fff" stroke-width="1.7" stroke-linecap="round"/>
  <circle cx="1659.1" cy="1050.4" r="1.5" fill="#fff"/>
  <!-- volume -->
  <path d="M1684 1040.4 H1687.4 L1692.6 1035.8 V1052 L1687.4 1047.4 H1684 Z" stroke="#fff" stroke-width="1.4" stroke-linejoin="round"/>
  <path d="M1696 1039.8 A5.6 5.6 0 0 1 1696 1048 M1699.4 1037 A9.6 9.6 0 0 1 1699.4 1050.8 M1702.8 1034.6 A13.4 13.4 0 0 1 1702.8 1053.2" stroke="#fff" stroke-width="1.4" stroke-linecap="round"/>
  <!-- battery -->
  <rect x="1724.6" y="1037.6" width="15.6" height="13" rx="2.4" stroke="#fff" stroke-width="1.4"/>
  <rect x="1727.2" y="1040.2" width="10.4" height="7.8" rx="1" fill="#fff"/>
  <path d="M1741 1041.6 H1742.4 A1 1 0 0 1 1743.4 1042.6 V1045.6 A1 1 0 0 1 1742.4 1046.6 H1741 Z" fill="#fff"/>
  <path d="M1720.4 1034.4 V1037 M1724.4 1034.4 V1037 M1719 1037 H1725.8 V1039.4 A3.4 3.4 0 0 1 1719 1039.4 Z M1722.4 1042.8 V1046.6 A2 2 0 0 0 1724.4 1048.6" stroke="#fff" stroke-width="1.3" fill="#fff" fill-opacity="0" stroke-linecap="round"/>
  <path d="M1719 1037 H1725.8 V1039.4 A3.4 3.4 0 0 1 1719 1039.4 Z" fill="#fff"/>
  <!-- notification -->
  <circle cx="1879" cy="1043.8" r="12.3" fill="#dca6e8"/>
</svg>
<div class="tt" id="w1" style="left:76.6px;letter-spacing:-0.366px;top:1023px">5°C</div>
<div class="tt" id="w2" style="left:76.6px;letter-spacing:0.524px;top:1046.8px;color:#dadada">Cloudy</div>
<div class="tt" id="k1" style="left:1584.5px;letter-spacing:-1.220px;top:1033px">ENG</div>
<div class="tt" id="k2" style="left:1808.4px;letter-spacing:-0.558px;top:1021.5px">17:55</div>
<div class="tt" id="k3" style="left:1765.9px;letter-spacing:-0.418px;top:1044.5px">16.02.2023</div>
<div class="tt" id="k4" style="left:1867px;top:1033px;width:24px;text-align:center;color:#2a1838;font-size:15.5px">1</div>
<div class="abs" id="wordw" style="left:1013.6px;top:1028px;font-family:'Liberation Sans',sans-serif;font-weight:bold;font-size:28px;line-height:30px;color:#1b50b2;transform:scale(.84,1) skewX(-4deg);transform-origin:0 0;-webkit-text-stroke:.8px #1b50b2">W</div>
<!--/TASK-->

</div>
</body>
</html>
